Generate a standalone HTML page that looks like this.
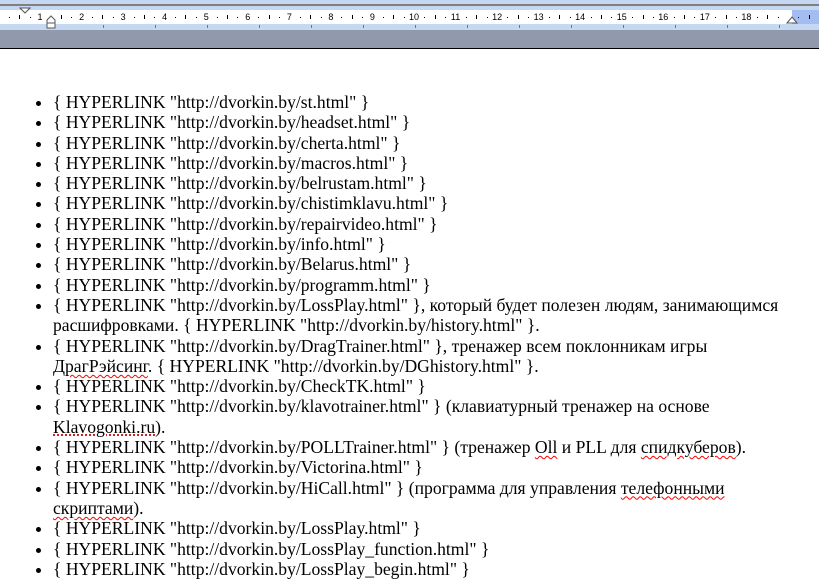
<!DOCTYPE html>
<html><head><meta charset="utf-8"><style>
html,body{margin:0;padding:0;width:819px;height:581px;overflow:hidden;background:#fff;font-family:"Liberation Serif",serif;}
.top{position:absolute;left:0;top:0;width:819px;height:30px;background:#c6d7f1;}
.gl{position:absolute;left:0;top:4px;width:819px;height:2px;background:#808080;}
.rul{position:absolute;left:0;top:10px;width:792px;height:14px;background:#fff;}
.rulr{position:absolute;left:792px;top:10px;width:27px;height:14px;background:#a3bdf0;}
.gray{position:absolute;left:0;top:30px;width:819px;height:18px;background:#9199ac;}
.bl{position:absolute;left:0;top:48px;width:819px;height:1px;background:#000;}
.n{position:absolute;top:10px;font:9px "Liberation Sans",sans-serif;color:#000;line-height:14px;transform:translateX(-50%);}
.t{position:absolute;width:1px;height:4px;background:#000;top:15px;}
.d{position:absolute;width:1px;height:1px;background:#000;top:17px;}
.m{position:absolute;width:1px;height:3px;background:#777;top:25px;}
ul{position:absolute;left:0;top:92px;margin:0;padding:0 0 0 53px;font-size:17.6px;line-height:20.3px;color:#000;width:760px;}
li{list-style:disc;white-space:nowrap;}
.w{text-decoration:underline wavy red;text-decoration-thickness:1px;text-underline-offset:2px;}
.k{text-decoration:underline dotted #c00;text-underline-offset:2px;}
</style></head><body>
<div class="top"></div><div class="gl"></div><div class="rul"></div><div class="rulr"></div>
<div class="gray"></div><div class="bl"></div>
<div id="r"></div>
<svg style="position:absolute;left:19px;top:7px" width="12" height="8"><path d="M1 1 H11 L6 6 Z" fill="#fff" stroke="#555"/></svg>
<svg style="position:absolute;left:46px;top:15px" width="10" height="14"><path d="M1 5 L5 1 L9 5 V8 H1 Z M1 8 H9 V13 H1 Z" fill="#fff" stroke="#555"/></svg>
<svg style="position:absolute;left:786px;top:15px" width="12" height="9"><path d="M1 8 L6 2 L11 8 Z" fill="#fff" stroke="#555"/></svg>
<script>
var r=document.getElementById('r'),h='';var s=41.55,o=-1.5;
for(var i=0;i<=19;i++){var x=o+i*s;
 if(i>0&&i<19)h+='<div class="n" style="left:'+x+'px">'+i+'</div>';
 h+='<div class="t" style="left:'+(x+s/2)+'px"></div>';
 h+='<div class="d" style="left:'+(x+s/4)+'px"></div><div class="d" style="left:'+(x+3*s/4)+'px"></div>';
 h+='<div class="m" style="left:'+(103+i*52)+'px"></div>';}
r.innerHTML=h;
</script>
<ul>
<li>{ HYPERLINK "http://dvorkin.by/st.html" }</li>
<li>{ HYPERLINK "http://dvorkin.by/headset.html" }</li>
<li>{ HYPERLINK "http://dvorkin.by/cherta.html" }</li>
<li>{ HYPERLINK "http://dvorkin.by/macros.html" }</li>
<li>{ HYPERLINK "http://dvorkin.by/belrustam.html" }</li>
<li>{ HYPERLINK "http://dvorkin.by/chistimklavu.html" }</li>
<li>{ HYPERLINK "http://dvorkin.by/repairvideo.html" }</li>
<li>{ HYPERLINK "http://dvorkin.by/info.html" }</li>
<li>{ HYPERLINK "http://dvorkin.by/Belarus.html" }</li>
<li>{ HYPERLINK "http://dvorkin.by/programm.html" }</li>
<li>{ HYPERLINK "http://dvorkin.by/LossPlay.html" }, который будет полезен людям, занимающимся<br>расшифровками. { HYPERLINK "http://dvorkin.by/history.html" }.</li>
<li>{ HYPERLINK "http://dvorkin.by/DragTrainer.html" }, тренажер всем поклонникам игры<br><span class="w">ДрагРэйсинг</span>. { HYPERLINK "http://dvorkin.by/DGhistory.html" }.</li>
<li>{ HYPERLINK "http://dvorkin.by/CheckTK.html" }</li>
<li>{ HYPERLINK "http://dvorkin.by/klavotrainer.html" } (клавиатурный тренажер на основе<br><span class="k">Klavogonki.ru</span>).</li>
<li>{ HYPERLINK "http://dvorkin.by/POLLTrainer.html" } (тренажер <span class="w">Oll</span> и PLL для <span class="w">спидкуберов</span>).</li>
<li>{ HYPERLINK "http://dvorkin.by/Victorina.html" }</li>
<li>{ HYPERLINK "http://dvorkin.by/HiCall.html" } (программа для управления <span class="w">телефонными</span><br><span class="w">скриптами</span>).</li>
<li>{ HYPERLINK "http://dvorkin.by/LossPlay.html" }</li>
<li>{ HYPERLINK "http://dvorkin.by/LossPlay_function.html" }</li>
<li>{ HYPERLINK "http://dvorkin.by/LossPlay_begin.html" }</li>
</ul>
</body></html>
